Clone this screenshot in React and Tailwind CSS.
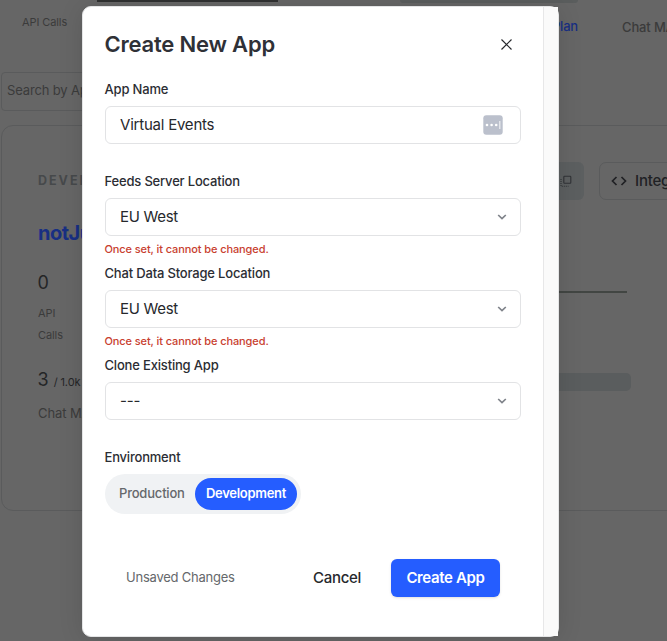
import React from "react";

function Chevron() {
  return (
    <svg width="10" height="6" viewBox="0 0 10 6" fill="none" className="mr-[13px]">
      <path d="M1.2 1L5 4.6L8.8 1" stroke="#7f838a" strokeWidth="1.7" />
    </svg>
  );
}

function SelectField({ label, value, hint }) {
  return (
    <div className="h-[92px]">
      <div className="-ml-[0.5px] h-6 text-[13px] leading-[15px] font-medium tracking-[-0.18px] text-[#2b2d33]">{label}</div>
      <div className="flex h-[38px] items-center justify-between rounded-[6px] border border-[#e2e3e5] pl-[14px] text-[15px] tracking-[-0.3px] text-[#26282c]">
        <span className={value === "---" ? "tracking-[-0.1px]" : ""}>{value}</span>
        <Chevron />
      </div>
      {hint && (
        <div className="-ml-[0.5px] pt-[6px] text-[11px] leading-[15px] font-medium tracking-[-0.1px] text-[#c8402f]">{hint}</div>
      )}
    </div>
  );
}

function Dashboard() {
  return (
    <div className="h-[641px] w-[667px] overflow-hidden bg-[#666666] text-[#3b3b3b]">
      <div className="flex h-[72px] w-[760px]">
        <div className="w-[97px] pt-[15px] pl-[22px] text-[11px] leading-[14px] tracking-[-0.1px]">API Calls</div>
        <div className="h-[2px] w-[181px] bg-[#303131]" />
        <div className="ml-[122px] w-[178px]">
          <div className="h-[3px] rounded-b-[3px] bg-[#5a5d5d]" />
          <div className="pt-[15px] text-right text-[13px] leading-4 font-medium tracking-[-0.2px] text-[#182f83]">
            Plan
          </div>
        </div>
        <div className="pt-[19px] pl-[44px] text-[13px] leading-4 font-medium tracking-[-0.15px]">Chat MA</div>
      </div>
      <div className="ml-px flex h-[39px] w-[300px] items-center rounded-[4px] border border-[#5a5b5c] pl-[5px] text-[13px] tracking-[-0.15px]">
        <span className="-mt-px">Search by Ap</span>
      </div>
      <div className="mt-[14px] ml-px flex h-[386px] w-[820px] rounded-[12px] border border-[#5a5b5c] pl-[36px]">
        <div className="w-[300px]">
          <div className="pt-[47px] text-[12.5px] leading-4 font-bold tracking-[2px] text-[#46494b]">
            DEVEL
          </div>
          <div className="pt-[32px] text-[20px] leading-6 font-bold tracking-[-0.5px] text-[#182f83]">notJu</div>
          <div className="-ml-[0.5px] pt-[26px] text-[18px] leading-6 text-[#242526]">0</div>
          <div className="w-[40px] pt-[7px] text-[11px] leading-[22px] tracking-[-0.1px]">API Calls</div>
          <div className="-ml-[0.5px] flex items-baseline gap-[5px] pt-[22px] text-[#242526]">
            <span className="text-[18px] leading-6">3</span>
            <span className="text-[11px] tracking-[-0.1px]">/ 1.0k</span>
          </div>
          <div className="pt-[13px] text-[13px] leading-4 tracking-[-0.1px]">Chat MA</div>
        </div>
        <div className="w-[400px] pt-[36px]">
          <div className="flex gap-[15px] pl-[82px]">
            <div className="flex h-[38px] w-[164px] shrink-0 items-center justify-end rounded-[6px] bg-[#5c5f60] pr-[12px]">
              <svg width="12" height="12" viewBox="0 0 12 12" fill="none" stroke="#303336" strokeWidth="1.1">
                <rect x="3.8" y="1.2" width="7" height="7" rx="0.7" />
                <path d="M1 4v7.2h7.5" strokeDasharray="1 1" />
              </svg>
            </div>
            <div className="flex h-[38px] w-[150px] shrink-0 items-center rounded-[7px] border border-[#5a5b5c] pl-[11px] text-[15px] font-medium tracking-[-0.2px] text-[#202124]">
              <svg width="16" height="10" viewBox="0 0 16 10" fill="none" stroke="#202124" strokeWidth="1.7">
                <path d="M5.5 1L1.5 5L5.5 9M10.5 1L14.5 5L10.5 9" />
              </svg>
              <span className="ml-[8px]">Integ</span>
            </div>
          </div>
          <div className="mt-[91px] h-[2px] w-[289px] bg-[#424643]" />
          <div className="mt-[80px] h-[18px] w-[293px] rounded-[5px] bg-[#5a5d5e]" />
        </div>
      </div>
    </div>
  );
}

function Modal() {
  return (
    <div className="absolute top-[6px] left-[82px] flex h-[631px] w-[477px] rounded-[9px] border border-[#e4e5e6] bg-white shadow-[0_2px_24px_rgba(0,0,0,0.12)]">
      <div className="w-[460px] pl-[22px]">
        <div className="flex h-[75px] items-start justify-between pt-[23px] pr-[30px]">
          <h1 className="-ml-[0.5px] text-[22px] leading-[28px] font-semibold tracking-[-0.2px] text-[#2f3137]">Create New App</h1>
          <svg width="13" height="13" viewBox="0 0 13 13" className="mt-[8px]" fill="none" stroke="#26282c" strokeWidth="1.2">
            <path d="M1.5 1.5L11.5 11.5M11.5 1.5L1.5 11.5" />
          </svg>
        </div>
        <div className="w-[416px]">
          <div className="h-[92px]">
            <div className="-ml-[0.5px] h-6 text-[13px] leading-[15px] font-medium tracking-[-0.18px] text-[#2b2d33]">App Name</div>
            <div className="flex h-[38px] items-center justify-between rounded-[6px] border border-[#e2e3e5] pr-[17px] pl-[14px] text-[15px] tracking-[-0.22px] text-[#26282c]">
              <span>Virtual Events</span>
              <svg width="20" height="20" viewBox="0 0 20 20">
                <rect x="0.3" y="0.3" width="19.4" height="19.4" rx="3" fill="#bbc0cc" />
                <g fill="#fff">
                  <circle cx="4" cy="10" r="1.3" />
                  <circle cx="8.6" cy="10" r="1.3" />
                  <circle cx="13.2" cy="10" r="1.3" />
                  <rect x="16" y="6" width="1.5" height="8" opacity="0.6" />
                </g>
              </svg>
            </div>
          </div>
          <SelectField label="Feeds Server Location" value="EU West" hint="Once set, it cannot be changed." />
          <SelectField label="Chat Data Storage Location" value="EU West" hint="Once set, it cannot be changed." />
          <SelectField label="Clone Existing App" value="---" />
          <div className="-ml-[0.5px] h-6 text-[13px] leading-[15px] font-medium tracking-[-0.2px] text-[#2b2d33]">Environment</div>
          <div className="flex h-10 w-[196px] items-center rounded-full bg-[#f0f2f4] text-[13px] tracking-[-0.2px]">
            <span className="w-[90px] pl-[14px] font-medium text-[#65686b]">Production</span>
            <span className="flex h-8 w-[102px] items-center justify-center rounded-full bg-[#255dff] font-semibold tracking-[-0.3px] text-white">
              Development
            </span>
          </div>
          <div className="mt-[45px] flex h-[38px] items-center pl-[21px]">
            <span className="w-[187px] text-[13px] tracking-[-0.23px] text-[#65686b]">Unsaved Changes</span>
            <span className="w-[78px] text-[15px] font-medium tracking-[-0.3px] text-[#26282c]">Cancel</span>
            <button className="h-[38px] w-[109px] rounded-[6px] bg-[#255dff] text-[15px] font-semibold tracking-[-0.35px] text-white shadow-sm">
              Create App
            </button>
          </div>
        </div>
      </div>
      <div className="h-[629px] w-[15px] border-l border-[#e7e7e8] bg-[#fafafa]" />
    </div>
  );
}

export default function App() {
  return (
    <div className="relative h-[641px] w-[667px] overflow-hidden font-['Inter','Liberation_Sans',sans-serif]">
      <Dashboard />
      <Modal />
    </div>
  );
}
